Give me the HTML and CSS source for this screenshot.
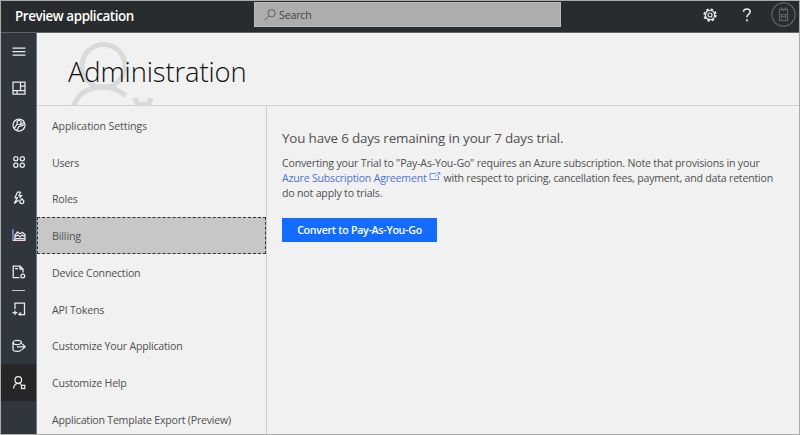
FILE: index.html
```html
<!DOCTYPE html>
<html lang="en">
<head>
<meta charset="utf-8">
<title>Preview application</title>
<link rel="stylesheet" href="styles.css">
</head>
<body>
<div class="app">
  <header class="topbar">
    <div class="brand"><span>Preview application</span></div>
    <div class="search">
      <svg width="12" height="12" viewBox="0 0 12 12"><circle cx="7.6" cy="4.2" r="3.6"/><path d="M5 6.9L.6 11.3"/></svg>
      <span>Search</span>
    </div>
    <div class="tools">
      <svg class="gear" width="14" height="14" viewBox="0 0 14 14"><circle cx="7" cy="7" r="5.800" stroke-width="1.700" stroke-dasharray="2.500 2.055"/><circle cx="7" cy="7" r="4.600" stroke-width="1.300"/><circle cx="7" cy="7" r="2" stroke-width="1.200"/></svg>
      <svg class="help" width="10" height="14" viewBox="0 0 10 14"><path d="M1.500 3.800C1.500 2 2.800 1 4.800 1S8.200 2.100 8.200 3.800C8.200 6 4.900 6.300 4.900 9.200" stroke-width="1.500"/><path d="M4.900 11.300v1.900" stroke-width="1.700"/></svg>
      <svg class="avatar" width="25" height="25" viewBox="0 0 25 25"><circle cx="12.5" cy="12.5" r="11.6"/><rect x="8.500" y="7.500" width="8" height="11"/><path d="M9.500 5.500l3 3 3-3M10.500 16.500v-4h4v4M10.500 14.500h4"/></svg>
    </div>
  </header>
  <div class="body">
    <nav class="rail">
      <a class="cell"><svg viewBox="0 0 14 14"><path d="M.5 4h13M.5 7.500h13M.5 11h13"/></svg></a>
      <a class="cell"><svg viewBox="0 0 14 14"><path d="M1 1h12v12H1zM8.500 1v8.500M1 9.500h12M8.500 5h4.500M5 9.500V13"/></svg></a>
      <a class="cell"><svg viewBox="0 0 14 14"><circle cx="7" cy="7" r="6"/><path d="M2 9.800C4.500 9.500 3.200 6.500 5.800 6.200c-1.800-1.700-.5-4 1.700-3.700 2.200.4 2 3 .3 4 2 .6 3-.8 4.500-2.500M4.500 12c2.500-.3.800-3 2.800-3.600 2-.5 3.500-.5 5-2"/></svg></a>
      <a class="cell"><svg viewBox="0 0 14 14"><circle cx="3.800" cy="3.700" r="2.100"/><circle cx="10.300" cy="3.700" r="2.100"/><circle cx="3.800" cy="10.300" r="2.100"/><circle cx="10.300" cy="10.300" r="2.100"/></svg></a>
      <a class="cell"><svg viewBox="0 0 14 14"><path d="M8.800 1H5.500L3 6.500h2.300L2.300 12.500 6.500 9M8.800 1L7 4.500h2.500L7.500 7M3.500 10.500l3-.5M10 7v2"/><circle cx="9.800" cy="10.500" r="2"/></svg></a>
      <a class="cell"><svg viewBox="0 0 14 14"><path d="M3 12V7.300l2.500-3.500 2.300 2L10.500 4.500 13 6.500V12M3.500 8.500l2.300-1.500 2.200 2 2.200-2 2.300 1.500M3 10.500h10"/><path class="axis" d="M1 1v12"/><path class="base" d="M1 12.400h12.500"/></svg></a>
      <a class="cell"><svg viewBox="0 0 14 14"><path d="M7.500 12.500H1.200V1H8l3 3v3.500M8 1v3h3M3 3.500h3"/><circle cx="10.800" cy="11" r="1.900"/></svg></a>
      <div class="rule"></div>
      <a class="cell"><svg viewBox="0 0 14 14"><path d="M3 7V1h9.500v11.500H7M9 10.500l-2 2 1.500 1M3 8.500v4.500M.5 10.700h5"/></svg></a>
      <a class="cell"><svg class="drop" viewBox="0 0 14 14"><ellipse cx="5.200" cy="3.500" rx="4.200" ry="2.100"/><path d="M1 3.500v7c0 2.400 8.400 2.400 8.400 0M9.400 3.500V5M5 7.800h8M10.300 5l2.800 2.800-2.800 2.800"/></svg></a>
      <a class="cell current"><svg class="drop" viewBox="0 0 14 14"><circle cx="6.300" cy="4" r="3.300"/><path d="M1.500 12.500C2 9 4 7.300 6.300 7.300c1.300 0 2.200.5 3 1.300"/><rect x="9.500" y="9.300" width="3.300" height="3.200"/></svg></a>
    </nav>
    <main class="page">
      <div class="hero">
        <svg class="mark" width="90" height="72" viewBox="0 0 90 72"><circle cx="35.500" cy="31" r="21.500"/><path d="M5 72C10 58 21 52 35.500 52c8 0 15 3 22 8.500"/><path class="cog" d="M64 64l5-2 3 5q3-1.500 6.500 0l2-5 5 2-3 8H68z"/></svg>
        <h1>Administration</h1>
      </div>
      <div class="columns">
        <ul class="menu">
          <li><span class="loose">Application Settings</span></li>
          <li><span>Users</span></li>
          <li><span>Roles</span></li>
          <li class="selected"><span class="loose">Billing</span></li>
          <li><span>Device Connection</span></li>
          <li><span>API Tokens</span></li>
          <li><span>Customize Your Application</span></li>
          <li><span>Customize Help</span></li>
          <li><span class="tight">Application Template Export (Preview)</span></li>
        </ul>
        <section class="detail">
          <h2>You have 6 days remaining in your 7 days trial.</h2>
          <p>
            <span class="line">Converting your Trial to "Pay-As-You-Go" requires an Azure subscription. Note that provisions in your</span>
            <span class="line linked"><a class="link">Azure Subscription Agreement</a><svg class="ext" width="12" height="9" viewBox="0 0 12 9"><path d="M7 1.500H1v6h8.500V4M6.500 4.500L10.800.8M8.300.6h2.600v2.300"/></svg><span>with respect to pricing, cancellation fees, payment, and data retention</span></span>
            <span class="line">do not apply to trials.</span>
          </p>
          <button class="convert">Convert to Pay-As-You-Go</button>
        </section>
      </div>
    </main>
  </div>
</div>
</body>
</html>
```
FILE: styles.css
```css
* { box-sizing: border-box; }
body { margin: 0; font-family: "Open Sans", "Noto Sans", sans-serif; font-size: 10.6px; color: #505050; }
svg { fill: none; flex: none; }
.app { width: 800px; height: 435px; border: 1px solid #ababab; display: flex; flex-direction: column; overflow: hidden; background: #f1f1f1; }

.topbar { height: 32px; flex: none; background: #292c2e; border-bottom: 1px solid #626466; display: flex; align-items: center; }
.brand { width: 253px; padding: 0 0 2px 14px; color: #fff; font-size: 13.4px; font-weight: 600; line-height: 20px; letter-spacing: -.42px; white-space: nowrap; }
.search { width: 307px; height: 25px; align-self: flex-start; margin-top: 1px; background: #adadad; border: 1px solid #bcbcbc; display: flex; align-items: center; padding-left: 9px; gap: 3px; color: #454545; letter-spacing: -.15px; }
.search svg { stroke: #606060; stroke-width: 1; }
.tools { margin-left: auto; display: flex; align-items: center; padding-right: 3px; padding-bottom: 4px; }
.tools svg { stroke: #e8e8e8; }
.tools .gear { margin-right: 25px; }
.tools .help { margin-right: 19px; }
.tools .avatar { stroke: #606466; stroke-width: 1.2; margin-bottom: 1px; }

.body { flex: 1; display: flex; min-height: 0; }
.rail { width: 35px; flex: none; background: #30363e; display: flex; flex-direction: column; }
.cell { height: 36.75px; flex: none; display: flex; align-items: center; justify-content: center; }
.cell svg { width: 14px; height: 14px; stroke: #ececec; stroke-width: 1.25; }
.cell .drop { margin-top: 2px; }
.cell .axis { stroke: #aaa0ff; stroke-width: 1.2; }
.cell .base { stroke: #ffd0e0; }
.rule { width: 13px; height: 1px; flex: none; margin: 0 auto -1px; background: #c8c8c8; }
.current { background: #252627; }

.page { flex: 1; min-width: 0; border-left: 1px solid #77797d; display: flex; flex-direction: column; }
.hero { height: 73px; flex: none; border-bottom: 1px solid #d2d2d2; position: relative; overflow: hidden; }
.mark { position: absolute; left: 31px; top: 2px; stroke: #dadada; stroke-width: 5; }
.cog { fill: #dadada; stroke: none; }
h1 { position: relative; margin: 0; padding: 19px 0 0 31px; font-size: 27.4px; line-height: 40px; font-weight: 300; letter-spacing: -.12px; color: #101010; white-space: nowrap; }
.columns { flex: 1; display: flex; min-height: 0; }
.menu { width: 230px; flex: none; margin: 0; padding: 1px 0 0; list-style: none; border-right: 1px solid #cfcfcf; letter-spacing: -.2px; }
.menu li { height: 36.75px; padding: 1px 0 0 14px; display: flex; align-items: center; white-space: nowrap; border: 1px solid transparent; }
.menu .selected { background: #c7c7c7; border: 1px dashed #333; }
.menu .loose { letter-spacing: -.12px; }
.menu .tight { letter-spacing: -.23px; }

.detail { flex: 1; min-width: 0; padding: 22px 0 0 15px; white-space: nowrap; }
h2 { margin: 0; font-size: 13.4px; line-height: 20px; font-weight: 400; letter-spacing: -.16px; color: #505050; }
p { margin: 7px 0 0; letter-spacing: -.19px; }
.line { display: flex; align-items: center; height: 15px; width: max-content; }
.linked { letter-spacing: -.21px; }
.link { color: #4b73d8; }
.ext { stroke: #6e90e0; margin: 0 3px 3px 2px; }
.convert { display: flex; align-items: center; justify-content: center; width: 155px; height: 24px; margin: 18px 0 0; padding: 0; border: 0; background: #146bff; color: #fff; font: 600 10.6px "Open Sans", sans-serif; letter-spacing: -.26px; }
```
